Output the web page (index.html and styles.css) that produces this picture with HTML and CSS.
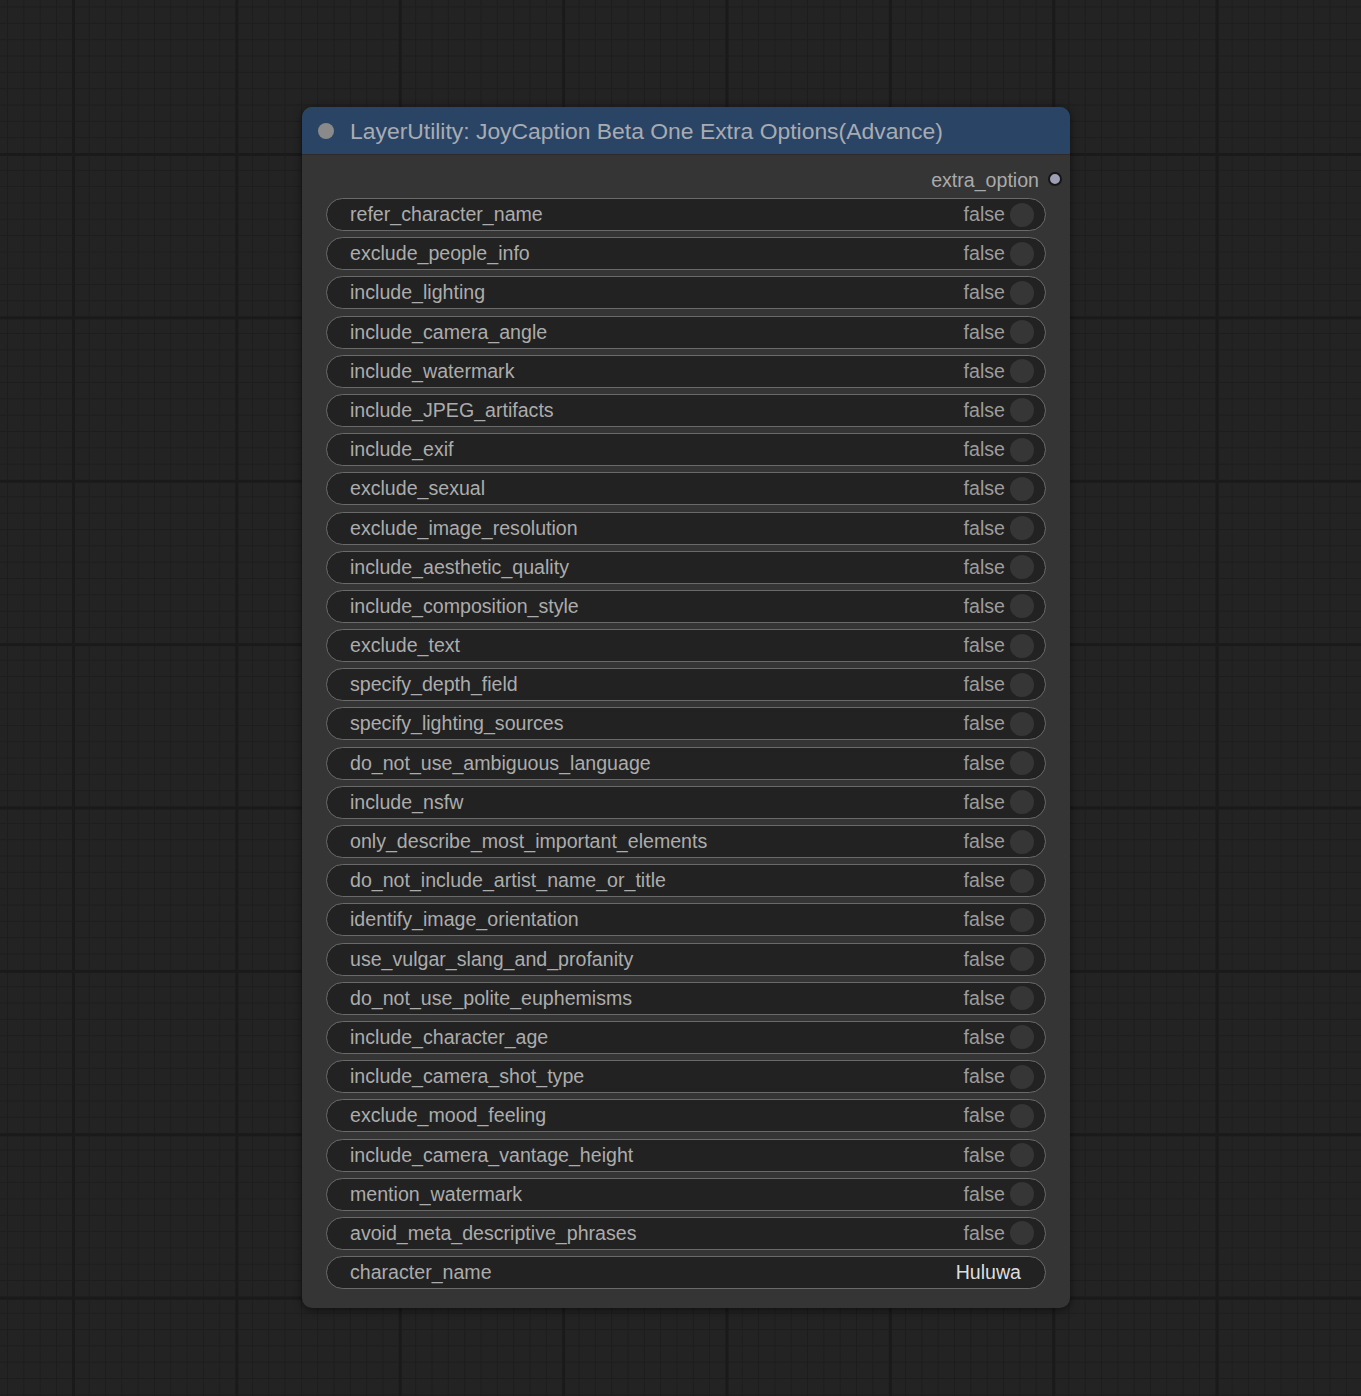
FILE: index.html
```html
<!DOCTYPE html>
<html>
<head>
<meta charset="utf-8">
<link rel="stylesheet" href="styles.css">
</head>
<body>
<div class="canvas">
  <div class="node">
    <div class="node-header">
      <span class="node-dot"></span>
      <span class="node-title">LayerUtility: JoyCaption Beta One Extra Options(Advance)</span>
    </div>
    <div class="node-body">
      <div class="output-row">
        <span class="output-label">extra_option</span>
        <span class="output-dot"></span>
      </div>
      <div class="widgets">
        <div class="widget"><span class="w-label">refer_character_name</span><span class="w-value">false</span><span class="w-toggle"></span></div>
        <div class="widget"><span class="w-label">exclude_people_info</span><span class="w-value">false</span><span class="w-toggle"></span></div>
        <div class="widget"><span class="w-label">include_lighting</span><span class="w-value">false</span><span class="w-toggle"></span></div>
        <div class="widget"><span class="w-label">include_camera_angle</span><span class="w-value">false</span><span class="w-toggle"></span></div>
        <div class="widget"><span class="w-label">include_watermark</span><span class="w-value">false</span><span class="w-toggle"></span></div>
        <div class="widget"><span class="w-label">include_JPEG_artifacts</span><span class="w-value">false</span><span class="w-toggle"></span></div>
        <div class="widget"><span class="w-label">include_exif</span><span class="w-value">false</span><span class="w-toggle"></span></div>
        <div class="widget"><span class="w-label">exclude_sexual</span><span class="w-value">false</span><span class="w-toggle"></span></div>
        <div class="widget"><span class="w-label">exclude_image_resolution</span><span class="w-value">false</span><span class="w-toggle"></span></div>
        <div class="widget"><span class="w-label">include_aesthetic_quality</span><span class="w-value">false</span><span class="w-toggle"></span></div>
        <div class="widget"><span class="w-label">include_composition_style</span><span class="w-value">false</span><span class="w-toggle"></span></div>
        <div class="widget"><span class="w-label">exclude_text</span><span class="w-value">false</span><span class="w-toggle"></span></div>
        <div class="widget"><span class="w-label">specify_depth_field</span><span class="w-value">false</span><span class="w-toggle"></span></div>
        <div class="widget"><span class="w-label">specify_lighting_sources</span><span class="w-value">false</span><span class="w-toggle"></span></div>
        <div class="widget"><span class="w-label">do_not_use_ambiguous_language</span><span class="w-value">false</span><span class="w-toggle"></span></div>
        <div class="widget"><span class="w-label">include_nsfw</span><span class="w-value">false</span><span class="w-toggle"></span></div>
        <div class="widget"><span class="w-label">only_describe_most_important_elements</span><span class="w-value">false</span><span class="w-toggle"></span></div>
        <div class="widget"><span class="w-label">do_not_include_artist_name_or_title</span><span class="w-value">false</span><span class="w-toggle"></span></div>
        <div class="widget"><span class="w-label">identify_image_orientation</span><span class="w-value">false</span><span class="w-toggle"></span></div>
        <div class="widget"><span class="w-label">use_vulgar_slang_and_profanity</span><span class="w-value">false</span><span class="w-toggle"></span></div>
        <div class="widget"><span class="w-label">do_not_use_polite_euphemisms</span><span class="w-value">false</span><span class="w-toggle"></span></div>
        <div class="widget"><span class="w-label">include_character_age</span><span class="w-value">false</span><span class="w-toggle"></span></div>
        <div class="widget"><span class="w-label">include_camera_shot_type</span><span class="w-value">false</span><span class="w-toggle"></span></div>
        <div class="widget"><span class="w-label">exclude_mood_feeling</span><span class="w-value">false</span><span class="w-toggle"></span></div>
        <div class="widget"><span class="w-label">include_camera_vantage_height</span><span class="w-value">false</span><span class="w-toggle"></span></div>
        <div class="widget"><span class="w-label">mention_watermark</span><span class="w-value">false</span><span class="w-toggle"></span></div>
        <div class="widget"><span class="w-label">avoid_meta_descriptive_phrases</span><span class="w-value">false</span><span class="w-toggle"></span></div>
        <div class="widget text-widget"><span class="w-label">character_name</span><span class="w-text">Huluwa</span></div>
      </div>
    </div>
  </div>
</div>
</body>
</html>
```

FILE: styles.css
```css
html, body {
  margin: 0;
  padding: 0;
}
body {
  width: 1361px;
  height: 1396px;
  overflow: hidden;
  font-family: "Liberation Sans", Arial, sans-serif;
}
.canvas {
  width: 1361px;
  height: 1396px;
  background-color: #232323;
  background-image:
    linear-gradient(to right, #1a1a1a 0, #1a1a1a 2.5px, transparent 2.5px),
    linear-gradient(to bottom, #1a1a1a 0, #1a1a1a 2.5px, transparent 2.5px),
    linear-gradient(to right, #1d1d1d 0, #1d1d1d 1.3px, transparent 1.3px),
    linear-gradient(to bottom, #1d1d1d 0, #1d1d1d 1.3px, transparent 1.3px);
  background-size:
    163.4px 163.4px,
    163.4px 163.4px,
    16.34px 16.34px,
    16.34px 16.34px;
  background-position:
    72px 0,
    0 153px,
    7px 0,
    0 6.5px;
  padding: 107px 0 0 302px;
  box-sizing: border-box;
}
.node {
  width: 768px;
  border-radius: 10px;
  background: #353535;
  box-shadow: 0 2px 8px rgba(0, 0, 0, 0.55);
}
.node-header {
  height: 48px;
  background: #2a4465;
  border-radius: 10px 10px 0 0;
  border-bottom: 1px solid #2b2b2b;
  display: flex;
  align-items: center;
  padding-left: 16px;
  box-sizing: border-box;
}
.node-dot {
  width: 16px;
  height: 16px;
  border-radius: 50%;
  background: #8a8a8a;
  margin-right: 16px;
  flex: none;
}
.node-title {
  color: #a8acb2;
  font-size: 22.9px;
  white-space: nowrap;
  position: relative;
  top: 1px;
}
.node-body {
  padding: 9px 24px 19px 24px;
}
.output-row {
  height: 32px;
  display: flex;
  align-items: center;
  justify-content: flex-end;
  margin-right: -16px;
  margin-bottom: 2px;
}
.output-label {
  color: #aaaaaa;
  font-size: 19.6px;
  margin-right: 9px;
}
.output-dot {
  display: block;
  width: 14px;
  height: 14px;
  box-sizing: border-box;
  border-radius: 50%;
  background: #9e9eb4;
  border: 2px solid #161616;
  flex: none;
  position: relative;
  top: -1px;
}
.widgets {
  display: flex;
  flex-direction: column;
  gap: 6.2px;
}
.widget {
  height: 33px;
  box-sizing: border-box;
  border: 1.5px solid #6a6a6a;
  border-radius: 17px;
  background: #222222;
  display: flex;
  align-items: center;
  padding-left: 23px;
  padding-right: 11px;
  font-size: 19.6px;
}
.w-label {
  color: #acacac;
  flex: 1;
  white-space: nowrap;
}
.w-value {
  color: #9c9c9c;
  margin-right: 5px;
}
.w-toggle {
  width: 24px;
  height: 24px;
  border-radius: 50%;
  background: #363636;
  flex: none;
}
.text-widget {
  padding-right: 24px;
}
.w-text {
  color: #dddddd;
}
```
